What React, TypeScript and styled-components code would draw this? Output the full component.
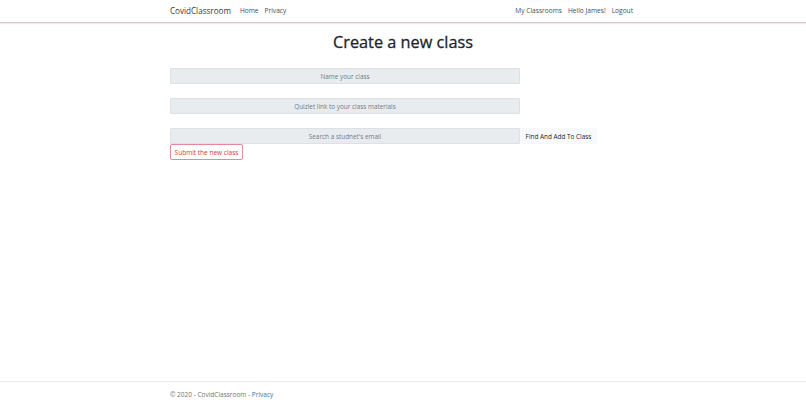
import styled, { createGlobalStyle } from "styled-components";

const GlobalStyle = createGlobalStyle`
  html, body {
    margin: 0;
    padding: 0;
    background: #fff;
  }
  body {
    font-family: "Open Sans", "Noto Sans", "Liberation Sans", sans-serif;
    color: #212529;
  }
  * {
    box-sizing: border-box;
  }
`;

const Page = styled.div`
  min-height: 100vh;
  display: flex;
  flex-direction: column;
`;

const NavBar = styled.header`
  height: 23px;
  border-bottom: 1px solid #e3c3cb;
  box-shadow: 0 1px 1px rgba(200, 120, 140, 0.18);
`;

const Container = styled.div`
  width: 466px;
  margin: 0 auto;
`;

const NavInner = styled(Container)`
  height: 100%;
  display: flex;
  align-items: center;
  padding-bottom: 1px;
`;

const Brand = styled.a`
  font-size: 8.1px;
  color: #343a40;
  margin-right: 9px;
`;

const NavList = styled.nav<{ $right?: boolean }>`
  display: flex;
  gap: 6px;
  margin-left: ${(p) => (p.$right ? "auto" : "0")};
  margin-right: ${(p) => (p.$right ? "3px" : "0")};
`;

const NavLink = styled.a`
  font-size: 6.6px;
  color: #474e55;
`;

const Main = styled.main`
  flex: 1;
`;

const Title = styled.h1`
  margin: 9px 0 16px;
  line-height: 20px;
  text-align: center;
  font-size: 16.3px;
  font-weight: 500;
  -webkit-text-stroke: 0.3px #212529;
  color: #212529;
`;

const Form = styled.form`
  display: flex;
  flex-direction: column;
`;

const Row = styled.div`
  display: flex;
  margin-bottom: 14px;
  &:last-of-type {
    margin-bottom: 0;
  }
`;

const Field = styled.input`
  width: 350px;
  height: 16px;
  padding: 0 6px;
  border: 1px solid #dde1e5;
  border-radius: 1px;
  background: #e9ecef;
  text-align: center;
  font-family: inherit;
  font-size: 6.4px;
  color: #495057;
  outline: none;
  &::placeholder {
    color: #737b82;
  }
`;

const FindButton = styled.button`
  width: 77px;
  height: 16px;
  padding: 0;
  border: none;
  background: #f8f9fa;
  font-family: inherit;
  font-size: 6.4px;
  color: #212529;
`;

const SubmitButton = styled.button`
  align-self: flex-start;
  width: 73px;
  height: 16px;
  padding: 0;
  border: 1px solid #e58a94;
  border-radius: 2px;
  background: #fff;
  font-family: inherit;
  font-size: 6.5px;
  color: #dc3545;
`;

const Footer = styled.footer`
  height: 26px;
  border-top: 1px solid #e9ecef;
`;

const FooterInner = styled(Container)`
  height: 100%;
  display: flex;
  align-items: center;
  font-size: 6.5px;
  color: #6c757d;
  padding-bottom: 1px;
  white-space: pre;
  a {
    color: #2d6fc0;
  }
`;

function App() {
  return (
    <Page>
      <GlobalStyle />
      <NavBar>
        <NavInner>
          <Brand>CovidClassroom</Brand>
          <NavList>
            <NavLink>Home</NavLink>
            <NavLink>Privacy</NavLink>
          </NavList>
          <NavList $right>
            <NavLink>My Classrooms</NavLink>
            <NavLink>Hello James!</NavLink>
            <NavLink>Logout</NavLink>
          </NavList>
        </NavInner>
      </NavBar>
      <Main>
        <Container>
          <Title>Create a new class</Title>
          <Form onSubmit={(e) => e.preventDefault()}>
            <Row>
              <Field placeholder="Name your class" />
            </Row>
            <Row>
              <Field placeholder="Quizlet link to your class materials" />
            </Row>
            <Row>
              <Field placeholder="Search a studnet's email" />
              <FindButton type="button">Find And Add To Class</FindButton>
            </Row>
            <SubmitButton type="submit">Submit the new class</SubmitButton>
          </Form>
        </Container>
      </Main>
      <Footer>
        <FooterInner>
          {"© 2020 - CovidClassroom - "}
          <a>Privacy</a>
        </FooterInner>
      </Footer>
    </Page>
  );
}

export default App;
